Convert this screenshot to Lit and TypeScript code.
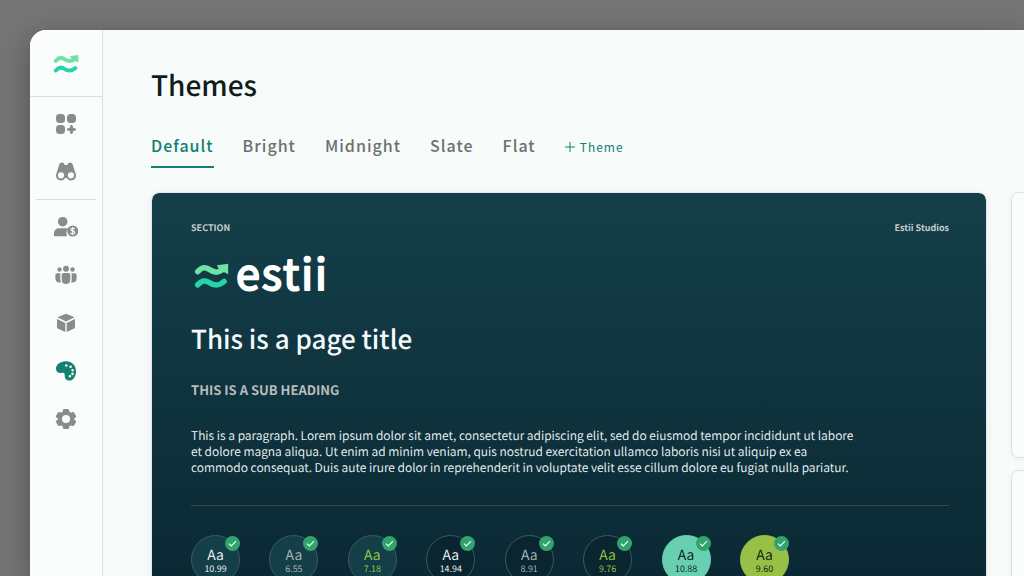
import { LitElement, html, css, svg } from "lit";
import { customElement, property, state } from "lit/decorators.js";
import { classMap } from "lit/directives/class-map.js";

const waves = svg`
  <path d="M2 9.200C5.500 5.200 8.500 4.600 12.500 7.200S19.500 11 24.500 7.500" fill="none" stroke="#6ee2a6" stroke-width="5" stroke-linecap="round"/>
  <path d="M19.500 3.300 29.700 2v9.500l-3-1.500-5-2z" fill="#6ee2a6"/>
  <path d="M2 21.200C5.500 17.200 8.500 16.600 12.500 19.200S20.500 23 26 18.200" fill="none" stroke="#27d3ad" stroke-width="5" stroke-linecap="round"/>`;

const icons: Record<string, unknown> = {
  dashboard: svg`<rect x="2" y="2" width="9" height="9" rx="3.500"/><rect x="13" y="2" width="9" height="9" rx="3.500"/><rect x="2" y="13" width="9" height="9" rx="3.500"/><path d="M17.500 13c1 0 1.300.6 1.300 1.500 0 1.200.5 1.700 1.700 1.700.9 0 1.500.3 1.500 1.300s-.6 1.300-1.500 1.300c-1.200 0-1.700.5-1.700 1.700 0 .9-.3 1.500-1.300 1.500s-1.300-.6-1.300-1.500c0-1.200-.5-1.700-1.700-1.700-.9 0-1.500-.3-1.500-1.300s.6-1.300 1.500-1.300c1.200 0 1.700-.5 1.700-1.700 0-.9.3-1.500 1.300-1.500z"/>`,
  discover: svg`<path fill-rule="evenodd" d="M5 5.500C5.400 3.300 6.400 2.500 8 2.500c1.500 0 2.400 1 2.700 2.600h2.600C13.600 3.500 14.500 2.500 16 2.500c1.600 0 2.600.8 3 3l2.400 7.200c.4 1 .6 1.900.6 2.800a4.900 4.900 0 0 1-9.200 2.400h-1.600A4.900 4.900 0 0 1 2 15.500c0-.9.200-1.800.6-2.800zM7 12.200a3.100 3.100 0 1 0 0 6.200 3.100 3.100 0 0 0 0-6.200zm10 0a3.100 3.100 0 1 0 0 6.200 3.100 3.100 0 0 0 0-6.200z"/>`,
  rates: svg`<circle cx="8.700" cy="6.700" r="4.800"/><path d="M0 20.800v-2C0 15.300 2.200 13.300 5.500 13.300h6.500c.8 0 1.400.1 2 .4a7 7 0 0 0-.8 7.600H.5z"/><circle cx="18.700" cy="16" r="5.500"/><path d="M20.600 14.200c-.3-.7-1-1-1.900-1-1.100 0-1.900.5-1.900 1.300 0 1.900 3.900 1 3.900 3 0 .8-.8 1.400-2 1.400-1 0-1.800-.4-2.100-1.200M18.700 12.100v7.800" fill="none" stroke="#fbfdfc" stroke-width="1.100"/>`,
  people: svg`<circle cx="12" cy="5.700" r="3"/><circle cx="5.500" cy="6.500" r="2.200"/><circle cx="18.500" cy="6.500" r="2.200"/><path d="M7.700 12c0-1.200.7-2 1.900-2h4.800c1.200 0 1.900.8 1.900 2v4.700c0 2.700-1.600 4.300-4.300 4.300s-4.300-1.600-4.300-4.300z"/><path d="M6.500 10.200H3.200c-1.100 0-1.800.7-1.800 1.800v3.500c0 2.500 1.500 3.900 4.300 4h1.300a7 7 0 0 1-.7-3v-4.700zM17.500 10.200h3.300c1.100 0 1.800.7 1.800 1.800v3.500c0 2.500-1.500 3.900-4.300 4h-1.300a7 7 0 0 0 .7-3v-4.700z"/>`,
  products: svg`<path d="M12 2.700 20.600 6.300 12 10.400 3.400 6.300zM3 8l8.300 3.900v9.200L4.200 17.700C3.300 17.300 3 16.900 3 16zM21 8l-8.300 3.900v9.200l7.100-3.400c.9-.4 1.200-.8 1.200-1.700z"/>`,
  themes: svg`<path fill-rule="evenodd" d="M11.500 2.300C17.900 2 22 6.500 22 12.200c0 5.300-2.900 9.300-6.600 9.400-3.200.1-4.800-2-4.700-5 .1-2.300-.3-3.200-2.200-2.900-3.500.8-6.300-.4-6.500-3.700-.2-4.500 4.500-7.500 9.500-7.700zM12.300 5.200a1.300 1.300 0 1 0 0 2.600 1.300 1.300 0 0 0 0-2.600zm4.300 1.200a1.300 1.300 0 1 0 0 2.600 1.300 1.300 0 0 0 0-2.600zm2 3.500a1.300 1.300 0 1 0 0 2.600 1.300 1.300 0 0 0 0-2.600zm-.1 3.700a1.300 1.300 0 1 0 0 2.600 1.300 1.300 0 0 0 0-2.600zm-2.600 2.400a1.300 1.300 0 1 0 0 2.600 1.300 1.300 0 0 0 0-2.600z"/>`,
  settings: svg`<path fill-rule="evenodd" stroke="currentColor" stroke-width="2" stroke-linejoin="round" d="M10 3h4l.7 2.700 1.800 1 2.700-.8 2 3.500-2 1.900v1.400l2 1.900-2 3.500-2.700-.8-1.800 1L14 21h-4l-.7-2.700-1.800-1-2.700.8-2-3.500 2-1.900v-1.400l-2-1.900 2-3.500 2.700.8 1.800-1zM12 6.900a5.100 5.100 0 1 0 0 10.200 5.100 5.100 0 0 0 0-10.200z"/>`,
};

@customElement("side-nav")
class SideNav extends LitElement {
  static styles = css`
    :host {
      display: block;
      flex: none;
      width: 72px;
      background: #fbfdfc;
      border-right: 1px solid #d9dfdd;
    }
    .brand {
      display: flex;
      align-items: center;
      justify-content: center;
      height: 66px;
      border-bottom: 1px solid #d9dfdd;
    }
    .brand svg {
      width: 26px;
      height: 22px;
    }
    .list {
      display: flex;
      flex-direction: column;
      padding-top: 3px;
    }
    .item {
      display: grid;
      place-items: center;
      height: 48px;
      color: #868e8b;
    }
    .item.active {
      color: #138070;
    }
    .item svg {
      width: 24px;
      height: 24px;
      fill: currentColor;
    }
    .rule {
      width: 60px;
      margin: 3px auto;
      border: 0;
      border-top: 1px solid #d9dfdd;
    }
  `;

  private link(name: string, label: string) {
    return html`<a class=${classMap({ item: true, active: name === "themes" })} href="#${name}" aria-label=${label}>
      <svg viewBox="0 0 24 24" aria-hidden="true">${icons[name]}</svg>
    </a>`;
  }

  render() {
    return html`
      <a class="brand" href="#home" aria-label="Home"><svg viewBox="-1.500 -1.500 32 27" aria-hidden="true">${waves}</svg></a>
      <nav class="list">
        ${this.link("dashboard", "Dashboard")} ${this.link("discover", "Discover")}
        <hr class="rule" />
        ${this.link("rates", "Rates")} ${this.link("people", "People")} ${this.link("products", "Products")}
        ${this.link("themes", "Themes")} ${this.link("settings", "Settings")}
      </nav>
    `;
  }
}

@customElement("contrast-swatch")
class ContrastSwatch extends LitElement {
  @property() tone = "raised";
  @property() ink = "light";
  @property() ratio = "";

  static styles = css`
    :host {
      display: block;
    }
    .disc {
      position: relative;
      display: flex;
      flex-direction: column;
      align-items: center;
      box-sizing: border-box;
      width: 49px;
      height: 49px;
      padding-top: 10px;
      border: 1px solid #3a5a63;
      border-radius: 50%;
    }
    .raised { background: #143f49; }
    .deep { background: #0a2530; }
    .mint { background: #68d0b0; border-color: #68d0b0; }
    .lime { background: #97c146; border-color: #97c146; }
    .light { color: #f4fafb; }
    .muted { color: #b4bcbe; }
    .accent { color: #98d23c; }
    .dark { color: #06120f; }
    .sample {
      font-size: 14px;
      font-weight: 350;
      line-height: 18px;
    }
    .ratio {
      font-size: 9px;
      font-weight: 350;
      line-height: 9px;
    }
    .badge {
      position: absolute;
      top: 0;
      right: -1px;
      width: 15px;
      height: 15px;
    }
  `;

  render() {
    return html`<div class="disc ${this.tone} ${this.ink}">
      <span class="sample">Aa</span>
      <span class="ratio">${this.ratio}</span>
      <svg class="badge" viewBox="0 0 15 15" aria-hidden="true">
        <circle cx="7.500" cy="7.500" r="7.500" fill="#30a46c" />
        <path d="M4 7.700 6.300 10 11 5.200" fill="none" stroke="#fff" stroke-width="1.100" />
      </svg>
    </div>`;
  }
}

@customElement("theme-preview")
class ThemePreview extends LitElement {
  private swatches = [
    ["raised", "light", "10.99"],
    ["raised", "muted", "6.55"],
    ["raised", "accent", "7.18"],
    ["deep", "light", "14.94"],
    ["deep", "muted", "8.91"],
    ["deep", "accent", "9.76"],
    ["mint", "dark", "10.88"],
    ["lime", "dark", "9.60"],
  ];

  static styles = css`
    :host {
      display: block;
      padding: 28px 37px 40px 39px;
      border: 1px solid #e3e9e7;
      border-radius: 8px;
      background: linear-gradient(#143f49, #0a2833 400px) padding-box;
      box-shadow: 0 2px 10px rgba(20, 50, 45, 0.06);
      color: #f4fafb;
    }
    .meta {
      display: flex;
      justify-content: space-between;
      font-size: 9px;
      font-weight: 700;
      line-height: 14px;
      color: #c6cecf;
    }
    .logo {
      display: block;
      width: 140px;
      height: 60px;
      margin-top: 8px;
      overflow: visible;
    }
    .word {
      font-size: 43px;
      font-weight: 400;
      letter-spacing: 2px;
      fill: #fff;
      stroke: #fff;
      stroke-width: 2px;
      stroke-linejoin: round;
    }
    .title {
      margin: 16px 0 0;
      font-size: 26px;
      font-weight: 500;
      line-height: 40px;
    }
    .sub {
      margin: 21px 0 0;
      font-size: 13px;
      font-weight: 700;
      line-height: 20px;
      color: #b9bdbd;
    }
    .text {
      max-width: 664px;
      margin: 28px 0 0;
      font-size: 12px;
      font-weight: 350;
      line-height: 16px;
      color: #f0f7f8;
    }
    .rule {
      margin: 29px 0;
      border: 0;
      border-top: 1px solid #2c4b55;
    }
    .swatches {
      display: flex;
      justify-content: space-between;
      margin-right: 160px;
    }
  `;

  render() {
    return html`
      <div class="meta"><span>SECTION</span><span>Estii Studios</span></div>
      <svg class="logo" viewBox="0 0 140 60" role="img" aria-label="estii">
        <g transform="translate(4.500 18.500) scale(1.100)">${waves}</g>
        <text class="word" x="45" y="47">estii</text>
      </svg>
      <h2 class="title">This is a page title</h2>
      <h3 class="sub">THIS IS A SUB HEADING</h3>
      <p class="text">
        This is a paragraph. Lorem ipsum dolor sit amet, consectetur adipiscing elit, sed do eiusmod tempor incididunt
        ut labore et dolore magna aliqua. Ut enim ad minim veniam, quis nostrud exercitation ullamco laboris nisi ut
        aliquip ex ea commodo consequat. Duis aute irure dolor in reprehenderit in voluptate velit esse cillum dolore eu
        fugiat nulla pariatur.
      </p>
      <hr class="rule" />
      <div class="swatches">
        ${this.swatches.map(
          ([tone, ink, ratio]) =>
            html`<contrast-swatch .tone=${tone} .ink=${ink} .ratio=${ratio}></contrast-swatch>`
        )}
      </div>
    `;
  }
}

@customElement("app-root")
class AppRoot extends LitElement {
  @state() private current = "Default";

  static styles = css`
    :host {
      display: block;
      box-sizing: border-box;
      height: 100vh;
      padding: 30px 0 0 30px;
      overflow: hidden;
      background: #757575;
      font-family: "Noto Sans CJK SC", "Noto Sans", sans-serif;
      text-rendering: geometricPrecision;
    }
    .window {
      display: flex;
      min-height: 100%;
      border-radius: 16px 0 0 0;
      overflow: hidden;
      background: #f7fbfa;
    }
    .shade {
      border-radius: 16px 0 0 0;
      height: 100%;
      box-shadow: 0 8px 30px rgba(0, 0, 0, 0.3);
    }
    .main {
      flex: 1;
      min-width: 0;
      padding: 34px 0 0 48px;
    }
    .heading {
      margin: 0;
      font-size: 28px;
      font-weight: 500;
      line-height: 42px;
      color: #101c19;
    }
    .tabs {
      display: flex;
      align-items: flex-start;
      gap: 29px;
      margin-top: 24px;
    }
    .tab,
    .add {
      padding: 0;
      border: 0;
      background: none;
      font-family: inherit;
      letter-spacing: 1px;
      cursor: pointer;
    }
    .tab {
      padding-bottom: 6px;
      border-bottom: 2px solid transparent;
      font-size: 16px;
      font-weight: 500;
      line-height: 30px;
      color: #6c706f;
    }
    .tab.active {
      border-color: #138070;
      color: #138070;
    }
    .add {
      display: flex;
      align-items: center;
      gap: 5px;
      font-size: 12px;
      line-height: 34px;
      color: #138070;
    }
    .add svg {
      width: 10px;
      height: 10px;
    }
    .board {
      display: grid;
      grid-template-columns: minmax(0, 1fr) 240px;
      align-items: start;
      gap: 24px;
      margin: 24px -227px 0 0;
    }
    .side {
      display: grid;
      gap: 12px;
    }
    .panel {
      box-sizing: border-box;
      min-height: 266px;
      border: 1px solid #dde2e0;
      border-radius: 8px;
      background: #fbfdfc;
      box-shadow: 0 2px 6px rgba(20, 50, 45, 0.05);
    }
  `;

  render() {
    return html`
      <div class="shade">
        <div class="window">
          <side-nav></side-nav>
          <main class="main">
            <h1 class="heading">Themes</h1>
            <div class="tabs">
              ${["Default", "Bright", "Midnight", "Slate", "Flat"].map(
                (name) => html`<button
                  class=${classMap({ tab: true, active: name === this.current })}
                  aria-pressed=${name === this.current}
                  @click=${() => (this.current = name)}
                >${name}</button>`
              )}
              <button class="add">
                <svg viewBox="0 0 10 10" aria-hidden="true"><path d="M5 0v10M0 5h10" stroke="currentColor" stroke-width="1" /></svg>Theme
              </button>
            </div>
            <div class="board">
              <theme-preview></theme-preview>
              <aside class="side">
                <section class="panel"></section>
                <section class="panel"></section>
              </aside>
            </div>
          </main>
        </div>
      </div>
    `;
  }
}
